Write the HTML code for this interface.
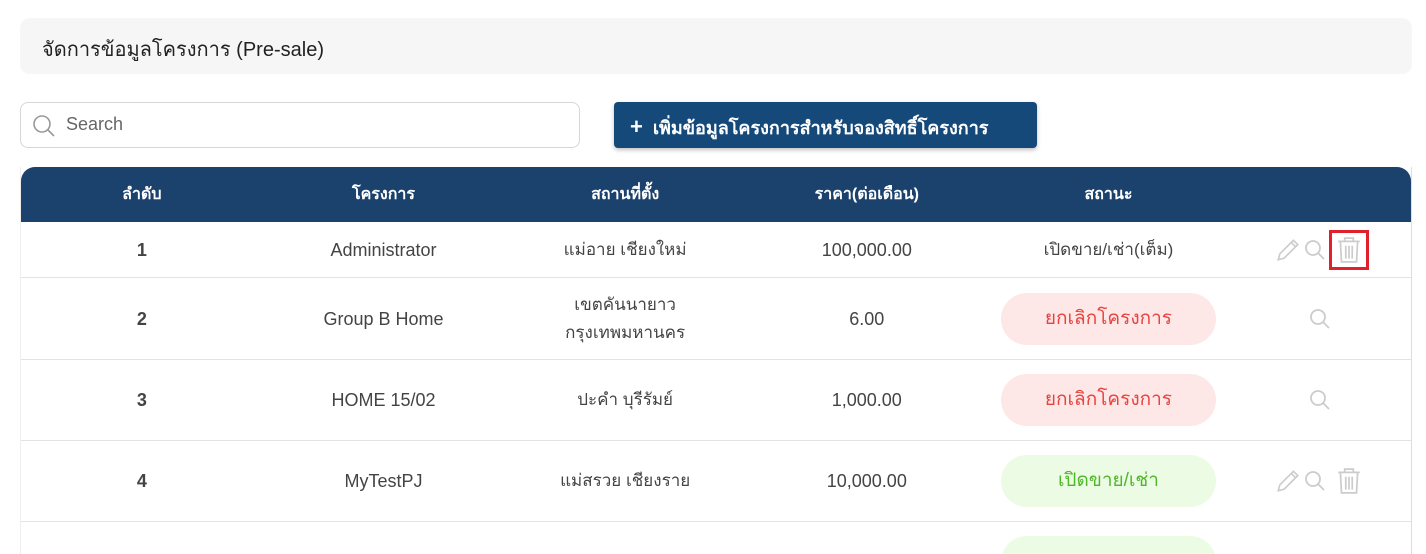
<!DOCTYPE html><html><head><meta charset="utf-8"><style>
*{margin:0;padding:0;box-sizing:border-box}
html,body{width:1426px;height:554px;overflow:hidden}
body{background:#fff;font-family:"Liberation Sans","Noto Sans CJK SC",sans-serif;color:#444;position:relative}
.hdr{position:absolute;left:20px;top:18px;width:1392px;height:56px;background:#f6f6f7;border-radius:10px;font-size:20px;color:#222;padding:15px 22px}
.search{position:absolute;left:20px;top:102px;width:560px;height:46px;border:1px solid #d6d6d6;border-radius:8px;font-size:18px;color:#666;padding:11px 0 0 45px}
.search svg{position:absolute;left:11px;top:11px}
.btn{position:absolute;left:614px;top:102px;width:423px;height:46px;background:#15497a;border-radius:4px;color:#fff;font-size:18px;font-weight:bold;padding:11px 0 0 16px;box-shadow:0 2px 4px rgba(0,0,0,.25);white-space:nowrap}
.tbl{position:absolute;left:20px;top:167px;width:1392px;height:387px;overflow:hidden;border-right:1px solid #ddd;border-left:1px solid #eee}
.th{height:55px;background:#1b416d;border-radius:14px 14px 0 0;display:flex;color:#fff;font-weight:bold;font-size:16px}
.row{display:flex;border-bottom:1px solid #e3e3e3;font-size:18px;color:#444}
.c{width:242px;display:flex;align-items:center;justify-content:center;text-align:center;line-height:28px}
.c:last-child{width:182px}
.pill{width:215px;height:52px;border-radius:26px;display:flex;align-items:center;justify-content:center;font-size:19px}
.red{background:#fde7e7;color:#e8433e}.grn{background:#ebfbe4;color:#4fb82a}
.ic{display:flex;gap:2px;align-items:center;margin-left:4px}
</style></head><body>
<div class="hdr">จัดการข้อมูลโครงการ (Pre-sale)</div>
<div class="search"><svg width="24" height="24" viewBox="0 0 24 24" fill="none" stroke="#999" stroke-width="1.6"><circle cx="10" cy="10" r="8"/><path d="M16 16l6 6"/></svg>Search</div>
<div class="btn"><span style="font-size:22px;margin-right:10px">+</span>เพิ่มข้อมูลโครงการสำหรับจองสิทธิ์โครงการ</div>
<div class="tbl">
<div class="th"><div class="c">ลำดับ</div><div class="c">โครงการ</div><div class="c">สถานที่ตั้ง</div><div class="c">ราคา(ต่อเดือน)</div><div class="c">สถานะ</div><div class="c"></div></div>
<div class="row" style="height:56px"><div class="c"><b>1</b></div><div class="c">Administrator</div><div class="c" style="font-size:17px">แม่อาย เชียงใหม่</div><div class="c">100,000.00</div><div class="c" style="font-size:17px">เปิดขาย/เช่า(เต็ม)</div><div class="c"><div class="ic">
<svg width="26" height="26" viewBox="0 0 24 24" fill="none" stroke="#ccc" stroke-width="1.5"><path d="M3 21l1.5-5.5L17 3l4 4L8.5 19.5z M15 5l4 4"/></svg>
<svg width="24" height="24" viewBox="0 0 24 24" fill="none" stroke="#ccc" stroke-width="1.8"><circle cx="10" cy="10" r="7"/><path d="M15 15l6 6"/></svg>
<span style="border:3px solid #e0202a;padding:3px 5px;display:flex"><svg width="24" height="28" viewBox="0 0 22 26" fill="none" stroke="#ccc" stroke-width="1.6"><path d="M1 5h20M7 5V2h8v3M3 5l1 19h14l1-19M8 9v12M11 9v12M14 9v12"/></svg></span>
</div></div></div>
<div class="row" style="height:82px"><div class="c"><b>2</b></div><div class="c">Group B Home</div><div class="c" style="font-size:17px">เขตคันนายาว<br>กรุงเทพมหานคร</div><div class="c">6.00</div><div class="c"><div class="pill red">ยกเลิกโครงการ</div></div><div class="c"><svg width="24" height="24" viewBox="0 0 24 24" fill="none" stroke="#ccc" stroke-width="1.8"><circle cx="10" cy="10" r="7"/><path d="M15 15l6 6"/></svg></div></div>
<div class="row" style="height:81px"><div class="c"><b>3</b></div><div class="c">HOME 15/02</div><div class="c" style="font-size:17px">ปะคำ บุรีรัมย์</div><div class="c">1,000.00</div><div class="c"><div class="pill red">ยกเลิกโครงการ</div></div><div class="c"><svg width="24" height="24" viewBox="0 0 24 24" fill="none" stroke="#ccc" stroke-width="1.8"><circle cx="10" cy="10" r="7"/><path d="M15 15l6 6"/></svg></div></div>
<div class="row" style="height:81px"><div class="c"><b>4</b></div><div class="c">MyTestPJ</div><div class="c" style="font-size:17px">แม่สรวย เชียงราย</div><div class="c">10,000.00</div><div class="c"><div class="pill grn">เปิดขาย/เช่า</div></div><div class="c"><div class="ic">
<svg width="26" height="26" viewBox="0 0 24 24" fill="none" stroke="#ccc" stroke-width="1.5"><path d="M3 21l1.5-5.5L17 3l4 4L8.5 19.5z M15 5l4 4"/></svg>
<svg width="24" height="24" viewBox="0 0 24 24" fill="none" stroke="#ccc" stroke-width="1.8"><circle cx="10" cy="10" r="7"/><path d="M15 15l6 6"/></svg>
<span style="border:3px solid transparent;padding:3px 5px;display:flex"><svg width="24" height="28" viewBox="0 0 22 26" fill="none" stroke="#ccc" stroke-width="1.6"><path d="M1 5h20M7 5V2h8v3M3 5l1 19h14l1-19M8 9v12M11 9v12M14 9v12"/></svg></span>
</div></div></div>
<div class="row" style="height:60px;border:0"><div class="c"></div><div class="c"></div><div class="c"></div><div class="c"></div><div class="c" style="align-items:flex-start;padding-top:14px"><div class="pill grn"></div></div><div class="c"></div></div>
</div>
</body></html>
